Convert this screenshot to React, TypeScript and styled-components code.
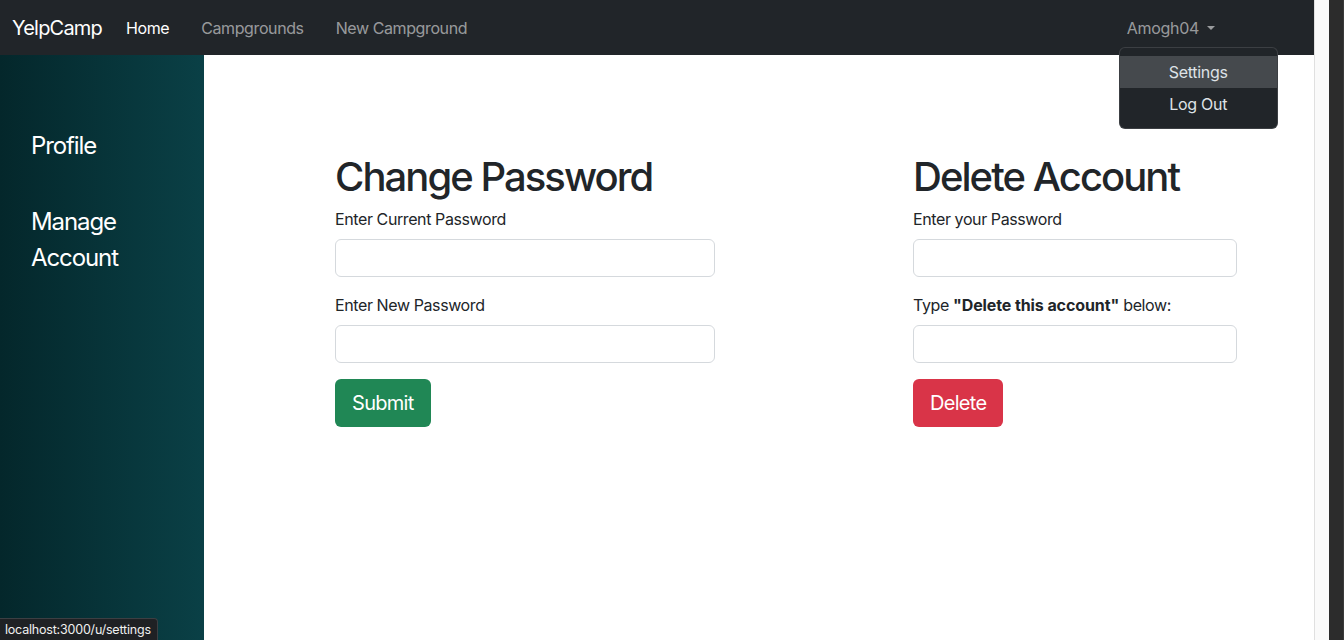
import React from "react";
import styled, { createGlobalStyle } from "styled-components";

const Global = createGlobalStyle`
  html, body { margin: 0; padding: 0; height: 100%; overflow: hidden; }
  body {
    font-family: Inter, "Noto Sans", "Liberation Sans", sans-serif;
    color: #212529;
    background: #2b2b2b;
  }
  * { box-sizing: border-box; }
`;

const Shell = styled.div`
  display: flex;
  width: 100%;
  height: 100vh;
  background: #2b2b2b;
`;

const Page = styled.div`
  flex: 1;
  display: flex;
  flex-direction: column;
  min-width: 0;
  background: #fff;
`;

const ScrollTrack = styled.div`
  flex: 0 0 15px;
  background: #fafafa;
  border-left: 1px solid #e0e0e0;
`;

const WindowEdge = styled.div`
  flex: 0 0 15px;
  background: #2c2c2c;
  border-right: 1px solid #3a3a3a;
`;

const Navbar = styled.nav`
  height: 55px;
  background: #212529;
  display: flex;
  align-items: center;
  padding-left: 12px;
  position: relative;
`;

const Brand = styled.a`
  color: #fff;
  font-size: 20px;
  line-height: 30px;
  margin-right: 24px;
  letter-spacing: -0.8px;
`;

const NavLinks = styled.div`
  display: flex;
  gap: 32px;
`;

const NavLink = styled.a<{ $active?: boolean }>`
  color: ${(p) => (p.$active ? "#fff" : "rgba(255,255,255,0.55)")};
  font-size: 16px;
  line-height: 24px;
  letter-spacing: -0.4px;
`;

const UserNav = styled.div`
  margin-left: auto;
  margin-right: 91px;
  position: relative;
`;

const Toggle = styled.a`
  display: flex;
  align-items: center;
  padding: 8px;
  color: rgba(255, 255, 255, 0.55);
  font-size: 16px;
  line-height: 24px;
  letter-spacing: -0.3px;
  &::after {
    content: "";
    margin-left: 8px;
    border-top: 4.8px solid rgba(255, 255, 255, 0.55);
    border-left: 4.2px solid transparent;
    border-right: 4.2px solid transparent;
  }
`;

const Menu = styled.div`
  position: absolute;
  top: 39px;
  left: 0;
  width: 159px;
  background: #212529;
  border: 1px solid rgba(255, 255, 255, 0.12);
  border-radius: 6px;
  padding: 8px 0;
  z-index: 5;
`;

const MenuItem = styled.a<{ $active?: boolean }>`
  display: block;
  text-align: center;
  padding: 4px 16px;
  font-size: 16px;
  line-height: 24px;
  color: #dee2e6;
  background: ${(p) => (p.$active ? "#45494d" : "transparent")};
  letter-spacing: -0.3px;
`;

const Body = styled.div`
  flex: 1;
  display: flex;
`;

const Sidebar = styled.aside`
  width: 204px;
  background: linear-gradient(90deg, #04272b 0%, #0a4046 100%);
  padding: 73px 0 0 31px;
  display: flex;
  flex-direction: column;
  gap: 40px;
`;

const SideLink = styled.a`
  color: #fff;
  font-size: 24px;
  line-height: 36px;
  letter-spacing: -1.1px;
  width: 110px;
`;

const Main = styled.main`
  flex: 1;
  display: flex;
  padding: 98px 0 0 131px;
  gap: 198px;
`;

const Column = styled.section<{ $w: number }>`
  width: ${(p) => p.$w}px;
  display: flex;
  flex-direction: column;
`;

const Heading = styled.h1`
  margin: 0 0 6px;
  font-size: 40px;
  line-height: 48px;
  font-weight: 500;
  letter-spacing: -1.95px;
`;

const Field = styled.div`
  margin-bottom: 16px;
`;

const Label = styled.label`
  display: block;
  font-size: 16px;
  line-height: 24px;
  margin-bottom: 8px;
  letter-spacing: -0.4px;
  b {
    letter-spacing: -0.1px;
  }
`;

const Input = styled.input`
  display: block;
  width: 100%;
  height: 38px;
  border: 1px solid #d5d9dd;
  border-radius: 6px;
  background: #fff;
  font-size: 16px;
  outline: none;
`;

const Button = styled.button<{ $variant: "success" | "danger" }>`
  align-self: flex-start;
  border: none;
  border-radius: 6px;
  padding: 0 17px;
  height: 48px;
  font-family: inherit;
  font-size: 20px;
  line-height: 30px;
  color: #fff;
  letter-spacing: -0.7px;
  background: ${(p) => (p.$variant === "success" ? "#208755" : "#d93448")};
`;

const StatusBar = styled.div`
  position: fixed;
  left: 0;
  bottom: 0;
  height: 22px;
  padding: 0 6px 0 5px;
  display: flex;
  align-items: center;
  background: #1f2124;
  border: 1px solid #3c3f43;
  border-left: none;
  border-bottom: none;
  border-top-right-radius: 4px;
  color: #f0f0f0;
  font-size: 12.5px;
  letter-spacing: -0.2px;
`;

export default function App() {
  return (
    <Shell>
      <Global />
      <Page>
        <Navbar>
          <Brand>YelpCamp</Brand>
          <NavLinks>
            <NavLink $active>Home</NavLink>
            <NavLink>Campgrounds</NavLink>
            <NavLink>New Campground</NavLink>
          </NavLinks>
          <UserNav>
            <Toggle>Amogh04</Toggle>
            <Menu>
              <MenuItem $active>Settings</MenuItem>
              <MenuItem>Log Out</MenuItem>
            </Menu>
          </UserNav>
        </Navbar>
        <Body>
          <Sidebar>
            <SideLink>Profile</SideLink>
            <SideLink>Manage Account</SideLink>
          </Sidebar>
          <Main>
            <Column $w={380}>
              <Heading>Change Password</Heading>
              <Field>
                <Label>Enter Current Password</Label>
                <Input type="password" />
              </Field>
              <Field>
                <Label>Enter New Password</Label>
                <Input type="password" />
              </Field>
              <Button $variant="success">Submit</Button>
            </Column>
            <Column $w={324}>
              <Heading>Delete Account</Heading>
              <Field>
                <Label>Enter your Password</Label>
                <Input type="password" />
              </Field>
              <Field>
                <Label>
                  Type <b>"Delete this account"</b> below:
                </Label>
                <Input type="text" />
              </Field>
              <Button $variant="danger">Delete</Button>
            </Column>
          </Main>
        </Body>
      </Page>
      <ScrollTrack />
      <WindowEdge />
      <StatusBar>localhost:3000/u/settings</StatusBar>
    </Shell>
  );
}
